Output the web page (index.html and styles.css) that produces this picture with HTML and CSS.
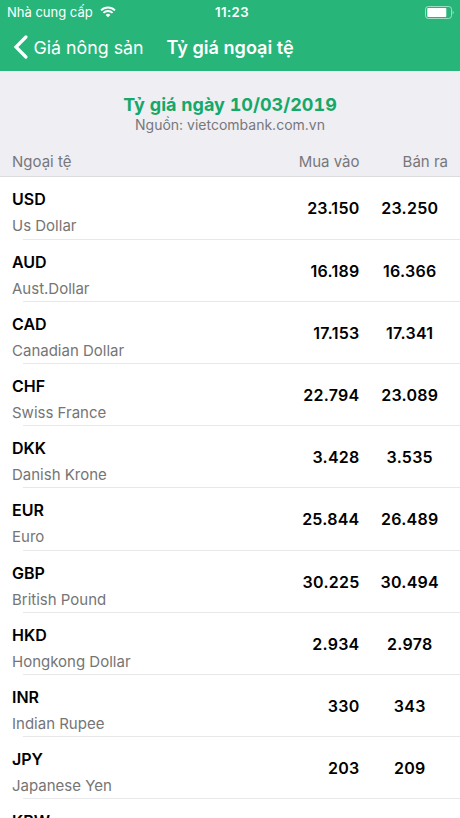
FILE: index.html
```html
<!DOCTYPE html>
<html lang="vi">
<head>
    <meta charset="UTF-8">
    <meta name="viewport" content="width=device-width, initial-scale=1.0">
    <title>Tỷ giá ngoại tệ</title>
    <link rel="stylesheet" href="styles.css">
</head>
<body>
    <header class="topbar">
        <div class="status">
            <div class="carrier">
                <span class="carrier-name">Nhà cung cấp</span>
                <svg class="wifi" width="16" height="12" viewBox="0 0 16 12">
                    <path d="M1 4.4a10 10 0 0 1 14 0M3.4 6.9a6.5 6.5 0 0 1 9.2 0" fill="none" stroke="#fff" stroke-width="1.9"/>
                    <path d="M8 11.3L5.6 8.9a3.4 3.4 0 0 1 4.8 0z" fill="#fff"/>
                </svg>
            </div>
            <span class="clock">11:23</span>
            <svg class="battery" width="29" height="13" viewBox="0 0 29 13">
                <rect x=".5" y=".5" width="26" height="12" rx="2.8" fill="none" stroke="#fff" stroke-opacity=".55"/>
                <rect x="2.3" y="2" width="19" height="9" rx=".8" fill="#fff"/>
                <path d="M27.7 4.5c1.2.6 1.2 3.4 0 4z" fill="#fff" fill-opacity=".6"/>
            </svg>
        </div>
        <nav class="nav">
            <svg class="back-icon" width="15" height="24" viewBox="0 0 15 24">
                <path d="M12.9 2L3 12l9.9 10" fill="none" stroke="#fff" stroke-width="3.2" stroke-linecap="round" stroke-linejoin="miter"/>
            </svg>
            <span class="back">Giá nông sản</span>
            <h1 class="title">Tỷ giá ngoại tệ</h1>
        </nav>
    </header>

    <section class="summary">
        <h2 class="date">Tỷ giá ngày 10/03/2019</h2>
        <p class="source">Nguồn: vietcombank.com.vn</p>
        <div class="columns">
            <span class="col-name">Ngoại tệ</span>
            <span class="col-buy">Mua vào</span>
            <span class="col-sell">Bán ra</span>
        </div>
    </section>

    <ul class="rates" id="rates"></ul>

    <script>
        const rates = [
            ['USD', 'Us Dollar', '23.150', '23.250'],
            ['AUD', 'Aust.Dollar', '16.189', '16.366'],
            ['CAD', 'Canadian Dollar', '17.153', '17.341'],
            ['CHF', 'Swiss France', '22.794', '23.089'],
            ['DKK', 'Danish Krone', '3.428', '3.535'],
            ['EUR', 'Euro', '25.844', '26.489'],
            ['GBP', 'British Pound', '30.225', '30.494'],
            ['HKD', 'Hongkong Dollar', '2.934', '2.978'],
            ['INR', 'Indian Rupee', '330', '343'],
            ['JPY', 'Japanese Yen', '203', '209'],
            ['KRW', '', '', '']
        ];

        document.getElementById('rates').innerHTML = rates.map(([code, name, buy, sell]) => `
            <li class="rate">
                <div class="currency">
                    <span class="code">${code}</span>
                    <span class="name">${name}</span>
                </div>
                <span class="buy">${buy}</span>
                <span class="sell">${sell}</span>
            </li>`).join('');
    </script>
</body>
</html>
```
FILE: styles.css
```css
* {
    box-sizing: border-box;
}

body {
    margin: 0;
    height: 818px;
    overflow: hidden;
    display: flex;
    flex-direction: column;
    font-family: Inter, "Liberation Sans", sans-serif;
    background-color: #fff;
}

.topbar {
    flex: none;
    height: 71px;
    background-color: #27b57a;
    color: #fff;
}

.status {
    display: grid;
    grid-template-columns: 1fr auto 1fr;
    align-items: center;
    height: 24px;
    padding: 0 6px 0 7px;
    font-size: 13px;
}

.carrier {
    display: flex;
    align-items: center;
    gap: 7px;
}

.clock {
    margin-left: 3px;
    font-size: 13.2px;
    font-weight: 600;
    letter-spacing: 0.4px;
}

.battery {
    justify-self: end;
}

.nav {
    display: flex;
    align-items: center;
    height: 46px;
    padding-left: 12.5px;
}

.back {
    margin-left: 6px;
    font-size: 17.8px;
}

.title {
    margin: 0 0 0 23px;
    font-size: 18.1px;
    font-weight: 600;
}

.summary {
    flex: none;
    height: 106.4px;
    padding-top: 22px;
    border-bottom: 1px solid #dcdcdf;
    background-color: #efeef3;
    color: #77777b;
    text-align: center;
}

.date {
    margin: 0;
    font-size: 18px;
    font-weight: 700;
    font-variant-numeric: tabular-nums;
    line-height: 24px;
    color: #14a869;
}

.source {
    margin: 0;
    font-size: 14px;
    line-height: 16px;
}

.columns {
    display: flex;
    align-items: center;
    height: 24px;
    margin-top: 16px;
    padding: 0 12px;
    font-size: 15px;
}

.col-name {
    flex: 1;
    text-align: left;
}

.col-sell {
    width: 88.5px;
    text-align: right;
}

.rates {
    list-style: none;
    margin: 0;
    padding: 0;
}

.rate {
    display: flex;
    align-items: center;
    height: 62.2px;
    padding-left: 12px;
    background: linear-gradient(#e8e8ea, #e8e8ea) 23px 100% / 100% 1px no-repeat;
    font-size: 16px;
    font-weight: 600;
}

.currency {
    flex: 1;
    display: flex;
    flex-direction: column;
    height: 100%;
    padding-top: 11px;
}

.code {
    line-height: 22px;
}

.name {
    margin-top: 6px;
    font-size: 15px;
    font-weight: 400;
    line-height: 20px;
    color: #757575;
}

.buy,
.sell {
    letter-spacing: 0.25px;
}

.sell {
    width: 100.5px;
    text-align: center;
}
```
